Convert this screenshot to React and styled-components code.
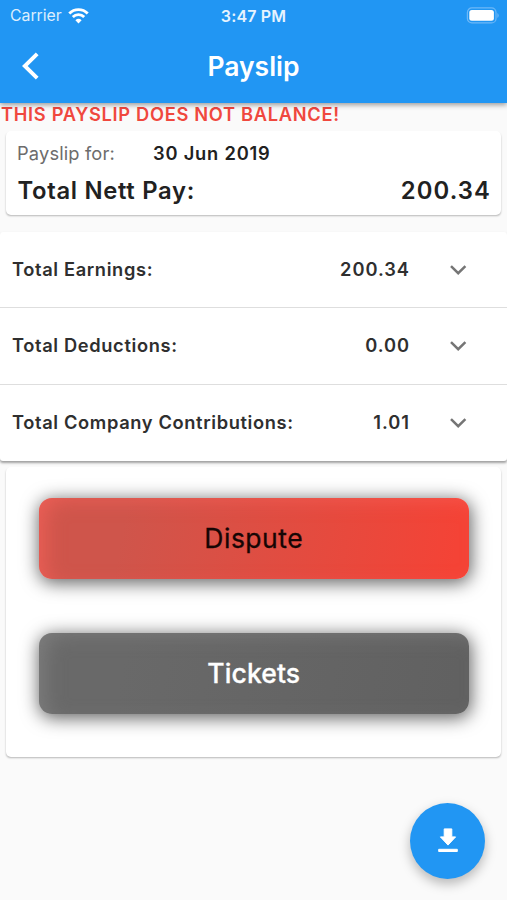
import React, { useState } from 'react';
import styled, { createGlobalStyle } from 'styled-components';

const GlobalStyle = createGlobalStyle`
  body {
    margin: 0;
    background: #fafafa;
  }
  * {
    box-sizing: border-box;
  }
`;

const Screen = styled.div`
  position: relative;
  width: 507px;
  height: 900px;
  overflow: hidden;
  background: #fafafa;
  color: #212121;
  font-family: Inter, 'Liberation Sans', sans-serif;
`;

const Header = styled.header`
  position: relative;
  z-index: 1;
  height: 103px;
  background: #2196f3;
  color: #fff;
  box-shadow: 0 2px 5px rgba(0, 0, 0, 0.38);
`;

const StatusBar = styled.div`
  display: grid;
  grid-template-columns: 1fr auto 1fr;
  align-items: center;
  height: 29px;
  padding: 0 8px 0 10px;
  font-size: 16px;
  line-height: 30px;
`;

const Carrier = styled.div`
  display: flex;
  align-items: center;
  gap: 6px;
  color: #dceefd;
  font-size: 15.8px;
  line-height: 31px;
`;

const Clock = styled.div`
  margin-right: 2px;
  font-weight: 600;
  color: #e6f3fe;
  letter-spacing: 0.15px;
`;

const BatteryIcon = styled.svg`
  justify-self: end;
`;

const AppBar = styled.div`
  display: grid;
  grid-template-columns: 76px 1fr 76px;
  align-items: center;
  height: 74px;
`;

const BackButton = styled.button`
  display: flex;
  width: 24px;
  margin-left: 19px;
  padding: 0;
  border: 0;
  background: none;
  color: #fff;
  cursor: pointer;
`;

const Title = styled.h1`
  margin: 0;
  text-align: center;
  font-size: 26.5px;
  font-weight: 600;
  line-height: 32px;
`;

const Warning = styled.div`
  height: 28px;
  padding: 0 1px;
  color: #f0483e;
  font-size: 18.3px;
  font-weight: 600;
  line-height: 23px;
  letter-spacing: 0.68px;
  white-space: nowrap;
`;

const Card = styled.section`
  margin: 0 6px;
  border-radius: 5px;
  background: #fff;
  box-shadow: 0 1.5px 2px -0.5px rgba(0, 0, 0, 0.27);
`;

const Summary = styled(Card)`
  height: 84px;
  padding: 8px 11px 0;
`;

const SummaryDate = styled.div`
  display: grid;
  grid-template-columns: 136px 1fr;
  height: 29px;
  font-size: 18.3px;
  line-height: 29px;
`;

const DateLabel = styled.span`
  color: #6c6c6c;
  font-weight: 400;
  letter-spacing: 0.15px;
`;

const DateValue = styled.span`
  font-weight: 600;
  letter-spacing: 0.8px;
`;

const SummaryTotal = styled.div`
  display: flex;
  justify-content: space-between;
  padding-left: 0.5px;
  font-size: 23.8px;
  font-weight: 600;
  line-height: 46px;
  letter-spacing: 0.7px;
`;

const TotalAmount = styled.span`
  margin-right: -1px;
  letter-spacing: 1.1px;
`;

const Totals = styled.div`
  position: relative;
  margin-top: 17px;
  border-radius: 3px;
  background: #fff;
  box-shadow: 0 2px 2.5px -0.5px rgba(0, 0, 0, 0.36);
`;

const TotalRow = styled.div`
  display: flex;
  align-items: center;
  height: ${({ $height }) => $height}px;
  padding: 0 37px 2px 12px;
  border-top: ${({ $divided }) => ($divided ? '1px solid #dedede' : '0')};
  color: #2f2f2f;
  font-size: 18.3px;
  font-weight: 600;
  letter-spacing: 0.63px;
  cursor: pointer;
`;

const Amount = styled.span`
  margin-left: auto;
  margin-right: 36px;
  letter-spacing: 0.95px;
`;

const Chevron = styled.svg`
  transform: ${({ $open }) => ($open ? 'rotate(180deg)' : 'none')};
`;

const Actions = styled(Card)`
  display: flex;
  flex-direction: column;
  gap: 54px;
  height: 290px;
  margin-top: 6px;
  padding: 31px 32px 0 32.5px;
`;

const ActionButton = styled.button`
  height: 81px;
  padding: 0 0 1px;
  border: 0;
  border-radius: 13px;
  background: ${({ $background }) => $background};
  box-shadow:
    1px 3px 18px 1px rgba(0, 0, 0, 0.62),
    inset 10px 5px 20px -4px ${({ $glow }) => $glow};
  color: ${({ $color }) => $color};
  font-family: inherit;
  font-size: 26.5px;
  font-weight: ${({ $weight }) => $weight};
  letter-spacing: ${({ $spacing }) => $spacing}px;
  -webkit-text-stroke: 0.3px currentColor;
  cursor: pointer;
`;

const DownloadButton = styled.button`
  position: absolute;
  right: 22px;
  bottom: 21px;
  display: flex;
  align-items: center;
  justify-content: center;
  width: 75px;
  height: 76px;
  padding: 0;
  border: 0;
  border-radius: 50%;
  background: #2196f3;
  box-shadow: 0 5px 12px rgba(0, 0, 0, 0.27);
  color: #fff;
  cursor: pointer;
`;

const totals = [
  { label: 'Total Earnings:', amount: '200.34', height: 75 },
  { label: 'Total Deductions:', amount: '0.00', height: 77 },
  { label: 'Total Company Contributions:', amount: '1.01', height: 77 },
];

const App = () => {
  const [open, setOpen] = useState(null);

  return (
    <>
      <GlobalStyle />
      <Screen>
        <Header>
          <StatusBar>
            <Carrier>
              Carrier
              <svg width="21" height="16" viewBox="0 0 21 16" fill="none">
                <path d="M1.3 5.4a13 13 0 0 1 18.4 0" stroke="#fff" strokeWidth="2.9" />
                <path d="M4.8 9.1a8 8 0 0 1 11.4 0" stroke="#fff" strokeWidth="2.8" />
                <path d="M10.5 15.4l-3.1-3.2a4.6 4.6 0 0 1 6.2 0z" fill="#fff" />
              </svg>
            </Carrier>
            <Clock>3:47 PM</Clock>
            <BatteryIcon width="33" height="17" viewBox="0 0 33 17">
              <rect x="1.4" y="0.9" width="28.6" height="15" rx="4.5" fill="none" stroke="#6db8f7" strokeWidth="1.2" />
              <rect x="3.3" y="2.9" width="24.6" height="10.8" rx="2.5" fill="#fff" />
              <path d="M31.4 6v5q1.3-.8 1.3-2.5T31.4 6z" fill="#6db8f7" />
            </BatteryIcon>
          </StatusBar>
          <AppBar>
            <BackButton aria-label="Back">
              <svg width="24" height="28" viewBox="0 0 24 28" fill="none">
                <path d="M18.2 1.8L5.8 14l12.4 12.2" stroke="currentColor" strokeWidth="3.9" />
              </svg>
            </BackButton>
            <Title>Payslip</Title>
          </AppBar>
        </Header>

        <Warning>THIS PAYSLIP DOES NOT BALANCE!</Warning>

        <Summary>
          <SummaryDate>
            <DateLabel>Payslip for:</DateLabel>
            <DateValue>30 Jun 2019</DateValue>
          </SummaryDate>
          <SummaryTotal>
            <span>Total Nett Pay:</span>
            <TotalAmount>200.34</TotalAmount>
          </SummaryTotal>
        </Summary>

        <Totals>
          {totals.map(({ label, amount, height }, i) => (
            <TotalRow
              key={label}
              $height={height}
              $divided={i > 0}
              onClick={() => setOpen(open === i ? null : i)}
            >
              <span>{label}</span>
              <Amount>{amount}</Amount>
              <Chevron $open={open === i} width="24" height="24" viewBox="0 0 24 24" fill="none">
                <path d="M5 9.2l7.2 7 7.2-7" stroke="#757575" strokeWidth="2.5" />
              </Chevron>
            </TotalRow>
          ))}
        </Totals>

        <Actions>
          <ActionButton
            $background="linear-gradient(100deg, #cf554b 20%, #f44336 96%)"
            $glow="rgba(250, 100, 92, 0.65)"
            $color="#160504"
            $weight={400}
            $spacing={0.5}
          >
            Dispute
          </ActionButton>
          <ActionButton
            $background="linear-gradient(100deg, #696969 20%, #616161 96%)"
            $glow="rgba(135, 135, 135, 0.65)"
            $color="#fff"
            $weight={500}
            $spacing={0.1}
          >
            Tickets
          </ActionButton>
        </Actions>

        <DownloadButton aria-label="Download">
          <svg width="24" height="28" viewBox="0 0 24 28" fill="currentColor" stroke="currentColor" strokeWidth="1" strokeLinejoin="round">
            <path d="M8.2 1.9h7.6v8h3.8L12 18.1l-7.6-8.2h3.8z" />
            <path d="M2.7 22.3h18.6v2.2h-18.6z" />
          </svg>
        </DownloadButton>
      </Screen>
    </>
  );
};

export default App;
